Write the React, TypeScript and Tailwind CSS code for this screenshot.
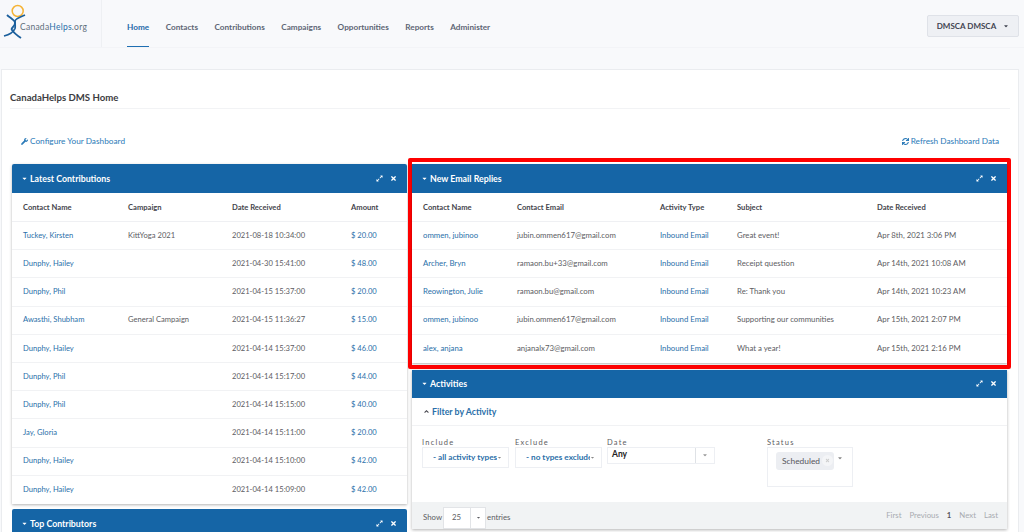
import React from "react";
import { FaCaretDown, FaExpandAlt, FaTimes, FaWrench, FaSync, FaAngleUp } from "react-icons/fa";

const navItems = ["Home", "Contacts", "Contributions", "Campaigns", "Opportunities", "Reports", "Administer"];

const contributions = [
  ["Tuckey, Kirsten", "KittYoga 2021", "2021-08-18 10:34:00", "$ 20.00"],
  ["Dunphy, Hailey", "", "2021-04-30 15:41:00", "$ 48.00"],
  ["Dunphy, Phil", "", "2021-04-15 15:37:00", "$ 20.00"],
  ["Awasthi, Shubham", "General Campaign", "2021-04-15 11:36:27", "$ 15.00"],
  ["Dunphy, Hailey", "", "2021-04-14 15:37:00", "$ 46.00"],
  ["Dunphy, Phil", "", "2021-04-14 15:17:00", "$ 44.00"],
  ["Dunphy, Phil", "", "2021-04-14 15:15:00", "$ 40.00"],
  ["Jay, Gloria", "", "2021-04-14 15:11:00", "$ 20.00"],
  ["Dunphy, Hailey", "", "2021-04-14 15:10:00", "$ 42.00"],
  ["Dunphy, Hailey", "", "2021-04-14 15:09:00", "$ 42.00"],
];

const replies = [
  ["ommen, jubinoo", "jubin.ommen617@gmail.com", "Inbound Email", "Great event!", "Apr 8th, 2021 3:06 PM"],
  ["Archer, Bryn", "ramaon.bu+33@gmail.com", "Inbound Email", "Receipt question", "Apr 14th, 2021 10:08 AM"],
  ["Reowington, Julie", "ramaon.bu@gmail.com", "Inbound Email", "Re: Thank you", "Apr 14th, 2021 10:23 AM"],
  ["ommen, jubinoo", "jubin.ommen617@gmail.com", "Inbound Email", "Supporting our communities", "Apr 15th, 2021 2:07 PM"],
  ["alex, anjana", "anjanalx73@gmail.com", "Inbound Email", "What a year!", "Apr 15th, 2021 2:16 PM"],
];

function PanelHeader({ title, tall }: { title: string; tall?: boolean }) {
  return (
    <div className={`flex items-center justify-between bg-[#1565a6] pl-[9px] pr-[10px] text-white ${tall ? "h-[29px]" : "h-[28px]"}`}>
      <div className="flex items-center gap-[2px] text-[8.8px] font-bold">
        <FaCaretDown className="text-[7px]" />
        <span>{title}</span>
      </div>
      <div className="flex items-center gap-[7px]">
        <FaExpandAlt className="text-[7px]" />
        <FaTimes className="text-[7px]" />
      </div>
    </div>
  );
}

function Logo() {
  return (
    <svg width="27" height="42" viewBox="0 0 27 42" className="shrink-0">
      <circle cx="17.7" cy="11" r="5.5" fill="none" stroke="#f5b335" strokeWidth="1.5" />
      <path d="M7 15 C10 18 15 20 15 23 C15 27 10 28 12 30 C14 33 18 36 21 38" fill="none" stroke="#1b5f9c" strokeWidth="1.8" />
      <path d="M25 15 C20 17 15 19 15 21 C15 25 15.5 27 15 28.5 C13 33 8 35 4 36" fill="none" stroke="#1b5f9c" strokeWidth="1.8" />
    </svg>
  );
}

export default function App() {
  return (
    <div className="h-[532px] w-[1024px] overflow-hidden bg-[#f8f9fb] font-['Lato','Liberation_Sans',sans-serif] text-[#5c5c62]">
      <header className="flex h-[48px] items-stretch border-b border-[#f3f4f7]">
        <div className="flex w-[102px] items-start border-r border-[#eef0f3] bg-[#f7f8fb]">
          <Logo />
          <span className="mt-[21px] -ml-[7px] text-[8.5px] leading-[12px] tracking-[0.25px] text-[#5f6f7c]">
            Canada<span className="text-[#2a6ea8]">Helps</span>.org
          </span>
        </div>
        <nav className="ml-[25px] flex items-stretch gap-[16.5px] text-[8.2px] font-bold text-[#5e6675]">
          {navItems.map((n, i) => (
            <div key={n} className={`flex items-center pt-[8px] ${i === 0 ? "border-b-[1px] border-[#1f6fb2] text-[#1f6aa9]" : ""}`}>
              {n}
            </div>
          ))}
        </nav>
        <div className="ml-auto mr-[5px] mt-[15px] flex h-[22px] w-[92px] items-center justify-center gap-[7px] rounded-[2px] border border-[#dfe2e8] bg-[#eef0f4] text-[8px] font-bold text-[#3f4350]">
          <span>DMSCA DMSCA</span>
          <FaCaretDown className="text-[6px]" />
        </div>
      </header>

      <main className="ml-[1px] mr-[5px] mt-[21px] h-[480px] border border-[#eaecef] bg-white">
        <div className="mx-[8px] flex h-[39px] items-end border-b border-[#f2f3f5] pb-[3px] text-[9.6px] font-bold leading-[14px] text-[#3c3c41]">
          CanadaHelps DMS Home
        </div>
        <div className="mx-[19px] mt-[26px] flex items-center justify-between text-[8.25px] leading-[12px] text-[#2a7ab8]">
          <div className="flex items-center gap-[2px]">
            <FaWrench className="text-[7px]" />
            <span>Configure Your Dashboard</span>
          </div>
          <div className="flex items-center gap-[2px]">
            <FaSync className="text-[7px]" />
            <span>Refresh Dashboard Data</span>
          </div>
        </div>

        <div className="mt-[11px] flex items-start">
          <div className="ml-[10px] mt-[6px] w-[395px]">
            <section className="overflow-hidden rounded-t-[2px] bg-white shadow-[0_1px_3px_rgba(0,0,0,0.3)]">
              <PanelHeader title="Latest Contributions" tall />
              <div className="grid h-[29px] grid-cols-[105px_104px_119px_1fr] items-center border-b border-[#eff0f3] pl-[11px] pt-[1px] text-[7.6px] font-bold text-[#44444c]">
                <span>Contact Name</span>
                <span>Campaign</span>
                <span>Date Received</span>
                <span>Amount</span>
              </div>
              {contributions.map((r, i) => (
                <div key={i} className="grid h-[28.2px] grid-cols-[105px_104px_119px_1fr] items-center border-b border-[#f1f2f4] pl-[11px] text-[7.6px] last:border-b-0">
                  <span className="text-[#2a6fa9]">{r[0]}</span>
                  <span>{r[1]}</span>
                  <span>{r[2]}</span>
                  <span className="text-[#2a6fa9]">{r[3]}</span>
                </div>
              ))}
            </section>
            <section className="mt-[5px] overflow-hidden rounded-t-[2px]">
              <PanelHeader title="Top Contributors" tall />
            </section>
          </div>

          <div className="ml-[1px] w-[603px]">
            <div className="rounded-[2px] border-[4px] border-[#fe0000] pb-[2px] pt-[2px]">
              <section className="bg-white shadow-[0_1px_2px_rgba(0,0,0,0.3)]">
                <PanelHeader title="New Email Replies" tall />
                <div className="grid h-[29px] grid-cols-[94px_143px_77px_140px_1fr] items-center border-b border-[#eff0f3] pl-[11px] pt-[1px] text-[7.6px] font-bold text-[#44444c]">
                  <span>Contact Name</span>
                  <span>Contact Email</span>
                  <span>Activity Type</span>
                  <span>Subject</span>
                  <span>Date Received</span>
                </div>
                {replies.map((r, i) => (
                  <div key={i} className="grid h-[28.2px] grid-cols-[94px_143px_77px_140px_1fr] items-center border-b border-[#f1f2f4] pl-[11px] text-[7.8px] last:border-b-0">
                    <span className="text-[#2a6fa9]">{r[0]}</span>
                    <span>{r[1]}</span>
                    <span className="text-[#2a6fa9]">{r[2]}</span>
                    <span>{r[3]}</span>
                    <span>{r[4]}</span>
                  </div>
                ))}
              </section>
            </div>

            <section className="ml-[4px] mr-[4px] mt-[1px] bg-white shadow-[0_1px_3px_rgba(0,0,0,0.3)]">
              <PanelHeader title="Activities" />
              <div className="flex h-[28px] items-center gap-[2px] border-b border-[#f1f2f4] pl-[11px] text-[8.8px] font-bold text-[#2a6fa9]">
                <FaAngleUp className="text-[7px] text-[#44444c]" />
                <span>Filter by Activity</span>
              </div>
              <div className="flex h-[76px] items-start pl-[10px] pt-[12px] text-[8px]">
                <div className="w-[93px]">
                  <div className="h-[9px] text-[7.5px] leading-[10px] tracking-[1.2px]">Include</div>
                  <div className="flex h-[21px] w-[87px] items-center overflow-hidden border border-[#edeff3] pl-[10px] text-[8.2px] font-bold whitespace-nowrap text-[#2a6fa9]">
                    <span className="w-[64px] overflow-hidden">- all activity types</span>
                    <FaCaretDown className="text-[5px] text-[#888]" />
                  </div>
                </div>
                <div className="w-[92px]">
                  <div className="h-[9px] text-[7.5px] leading-[10px] tracking-[1.2px]">Exclude</div>
                  <div className="flex h-[21px] w-[87px] items-center overflow-hidden border border-[#edeff3] pl-[10px] text-[8.2px] font-bold whitespace-nowrap text-[#2a6fa9]">
                    <span className="w-[64px] overflow-hidden">- no types excluded</span>
                    <FaCaretDown className="text-[5px] text-[#888]" />
                  </div>
                </div>
                <div className="w-[160px]">
                  <div className="h-[9px] text-[7.5px] leading-[10px] tracking-[1.2px]">Date</div>
                  <div className="flex h-[17px] w-[108px] border border-[#edeff3] font-bold text-[#222]">
                    <span className="flex-1 pl-[4px] text-[8.5px] leading-[12px]">Any</span>
                    <span className="flex w-[19px] items-center justify-center border-l border-[#dfe2e6]">
                      <FaCaretDown className="text-[6px] text-[#9a9a9a]" />
                    </span>
                  </div>
                </div>
                <div>
                  <div className="h-[9px] text-[7.5px] leading-[10px] tracking-[1.2px]">Status</div>
                  <div className="flex h-[40px] w-[86px] items-start gap-[3px] border border-[#edeff3] pl-[8px] pt-[4px]">
                    <div className="flex h-[18px] w-[58px] items-center gap-[2px] rounded-[3px] bg-[#eceef2] pl-[6px] text-[8.4px] text-[#55555c]">
                      <span>Scheduled</span>
                      <span className="flex h-[11px] w-[11px] items-center justify-center rounded-full bg-[#f4f5f7] text-[#ccc]">
                        <FaTimes className="text-[5px]" />
                      </span>
                    </div>
                    <FaCaretDown className="mt-[3px] text-[6px] text-[#888]" />
                  </div>
                </div>
              </div>
              <div className="flex h-[27px] items-start justify-between bg-[#f1f3f4] pl-[11px] pr-[9px] text-[7.8px]">
                <div className="mt-[5px] flex items-center gap-[1px]">
                  <span>Show</span>
                  <div className="flex h-[22px] w-[43px] items-center border border-[#e2e4e7] bg-white">
                    <span className="flex-1 pl-[8px]">25</span>
                    <span className="flex h-full w-[15px] items-center justify-center border-l border-[#e2e4e7]">
                      <FaCaretDown className="text-[5px]" />
                    </span>
                  </div>
                  <span>entries</span>
                </div>
                <div className="mt-[8px] flex gap-[8px] text-[#a8abb0]">
                  <span>First</span>
                  <span>Previous</span>
                  <span className="font-bold text-[#55555c]">1</span>
                  <span>Next</span>
                  <span>Last</span>
                </div>
              </div>
            </section>
          </div>
        </div>
      </main>
    </div>
  );
}
